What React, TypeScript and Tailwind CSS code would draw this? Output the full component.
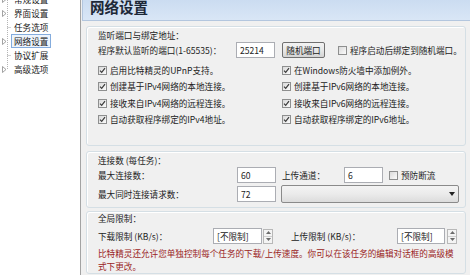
import React from "react";

const Check = ({ checked = true }: { checked?: boolean }) => (
  <span className="w-[9px] h-[9px] shrink-0 border border-[#8e8f8f] bg-linear-to-br from-[#dadada] to-[#fbfbfb] flex items-center justify-center">
    {checked && (
      <svg width="7" height="7" viewBox="0 0 7 7">
        <path d="M1 3.6 L2.7 5.4 L6 1.2" fill="none" stroke="#3a3a3a" strokeWidth="1.2" />
      </svg>
    )}
  </span>
);

const TreeMark = ({ leaf, last }: { leaf?: boolean; last?: boolean }) => (
  <svg width="11" height="14" viewBox="0 0 11 14" className="shrink-0">
    <line x1="7.5" y1="0" x2="7.5" y2={last ? 7 : 14} stroke="#b4b4b4" strokeDasharray="1 1" />
    {leaf ? (
      <line x1="7.5" y1="7.5" x2="11" y2="7.5" stroke="#a8a8a8" strokeDasharray="1 1" />
    ) : (
      <path d="M2.5 4.5 L6 7.5 L2.5 10.5 Z" fill="#fff" stroke="#8c8c8c" strokeWidth="0.8" />
    )}
  </svg>
);

const Box = ({ w, children }: { w: string; children?: React.ReactNode }) => (
  <div className={`${w} h-[16px] shrink-0 bg-white border border-[#abadb3] px-[3px] flex items-center`}>
    {children}
  </div>
);

const Spin = () => (
  <div className="w-[10px] h-[15px] shrink-0 flex flex-col border border-[#b8b8b8] bg-[#f4f4f4]">
    <div className="flex-1 flex items-center justify-center border-b border-[#cfcfcf]">
      <svg width="5" height="3" viewBox="0 0 5 3"><path d="M0 3 L2.5 0 L5 3 Z" fill="#6b6b6b" /></svg>
    </div>
    <div className="flex-1 flex items-center justify-center">
      <svg width="5" height="3" viewBox="0 0 5 3"><path d="M0 0 L2.5 3 L5 0 Z" fill="#6b6b6b" /></svg>
    </div>
  </div>
);

const tree = [
  { name: "常规设置", leaf: false },
  { name: "界面设置", leaf: false },
  { name: "任务选项", leaf: true },
  { name: "网络设置", leaf: false, selected: true },
  { name: "协议扩展", leaf: true },
  { name: "高级选项", leaf: false, last: true },
];

const leftChecks = [
  "启用比特精灵的UPnP支持。",
  "创建基于IPv4网络的本地连接。",
  "接收来自IPv4网络的远程连接。",
  "自动获取程序绑定的IPv4地址。",
];
const rightChecks = [
  "在Windows防火墙中添加例外。",
  "创建基于IPv6网络的本地连接。",
  "接收来自IPv6网络的远程连接。",
  "自动获取程序绑定的IPv6地址。",
];

export default function App() {
  return (
    <div className="w-[470px] h-[275px] overflow-hidden flex bg-white font-['Noto_Sans_CJK_SC',sans-serif] text-[8.6px] leading-[11px] text-[#222]">
      <aside className="w-[81px] shrink-0 bg-white border-r border-[#a3a3a3]">
        <div className="flex flex-col mt-[-8px]">
          {tree.map((t) => (
            <div key={t.name} className="h-[14px] flex items-center">
              <TreeMark leaf={t.leaf} last={t.last} />
              <span
                className={`px-[2px] border leading-[12px] ${
                  t.selected ? "border-[#84acdd] bg-[#edf4fc]" : "border-transparent"
                }`}
              >
                {t.name}
              </span>
            </div>
          ))}
        </div>
      </aside>

      <main className="flex-1 bg-[#f0f0f0] flex flex-col">
        <header className="h-[21px] ml-[1px] shrink-0 border-l border-b border-[#b3c6de] bg-linear-to-b from-[#cbdcf1] to-[#d9e6f6] flex items-end pl-[7px] pb-[6px]">
          <h1 className="text-[14.5px] leading-[14.5px] font-bold text-[#1d2838]">网络设置</h1>
        </header>

        <section className="ml-[5px] mr-[4px] mt-[5px] h-[120px] shrink-0 rounded-[3px] border border-[#d5dfe5] shadow-[inset_1px_1px_0_#fff] pl-[11px] pt-[3px]">
          <p>监听端口与绑定地址：</p>
          <div className="flex items-center h-[16px] mt-[1px]">
            <span className="w-[138px] shrink-0">程序默认监听的端口(1-65535)：</span>
            <Box w="w-[39px]">25214</Box>
            <div className="ml-[7px] w-[43px] h-[16px] shrink-0 border border-[#707070] rounded-[2px] bg-linear-to-b from-[#f3f3f3] via-[#e8e8e8] to-[#d4d4d4] flex items-center justify-center">
              随机端口
            </div>
            <span className="ml-[13px]"><Check checked={false} /></span>
            <span className="ml-[3px] whitespace-nowrap">程序启动后绑定到随机端口。</span>
          </div>
          <div className="grid grid-cols-[184px_1fr] mt-[4px]">
            {leftChecks.map((l, i) => (
              <React.Fragment key={l}>
                <div className="h-[16.5px] flex items-center gap-[3px]">
                  <Check />
                  <span>{l}</span>
                </div>
                <div className="h-[16.5px] flex items-center gap-[3px]">
                  <Check />
                  <span>{rightChecks[i]}</span>
                </div>
              </React.Fragment>
            ))}
          </div>
        </section>

        <section className="ml-[5px] mr-[4px] mt-[5px] h-[57px] shrink-0 rounded-[3px] border border-[#d5dfe5] shadow-[inset_1px_1px_0_#fff] pl-[11px] pt-[3px]">
          <p>连接数 (每任务)：</p>
          <div className="flex items-center h-[16px] mt-[1px]">
            <span className="w-[139px] shrink-0">最大连接数：</span>
            <Box w="w-[39px]">60</Box>
            <span className="ml-[6px] w-[62px] shrink-0">上传通道：</span>
            <Box w="w-[39px]">6</Box>
            <span className="ml-[6px]"><Check checked={false} /></span>
            <span className="ml-[3px]">预防断流</span>
          </div>
          <div className="flex items-center h-[18px] mt-[2px]">
            <span className="w-[139px] shrink-0">最大同时连接请求数：</span>
            <Box w="w-[39px]">72</Box>
            <div className="ml-[5px] w-[178px] h-[18px] shrink-0 border border-[#8a8a8a] rounded-[2px] bg-linear-to-b from-[#f3f3f3] via-[#ebebeb] to-[#dcdcdc] flex items-center justify-end pr-[3px]">
              <svg width="6" height="4" viewBox="0 0 6 4"><path d="M0 0 L3 4 L6 0 Z" fill="#222" /></svg>
            </div>
          </div>
        </section>

        <section className="ml-[5px] mr-[4px] mt-[3px] flex-1 rounded-[3px] border border-[#d5dfe5] shadow-[inset_1px_1px_0_#fff] pl-[11px] pt-[1px] mb-[2px]">
          <p>全局限制：</p>
          <div className="flex items-center h-[16px] mt-[4px]">
            <span className="w-[115px] shrink-0">下载限制 (KB/s)：</span>
            <Box w="w-[49px]">[不限制]</Box>
            <span className="ml-[1px]"><Spin /></span>
            <span className="ml-[18px] w-[106px] shrink-0">上传限制 (KB/s)：</span>
            <Box w="w-[48px]">[不限制]</Box>
            <span className="ml-[2px]"><Spin /></span>
          </div>
          <p className="mt-[3px] w-[360px] leading-[13px] text-[#9a2424]">
            比特精灵还允许您单独控制每个任务的下载/上传速度。你可以在该任务的编辑对话框的高级模式下更改。
          </p>
        </section>
      </main>
    </div>
  );
}
